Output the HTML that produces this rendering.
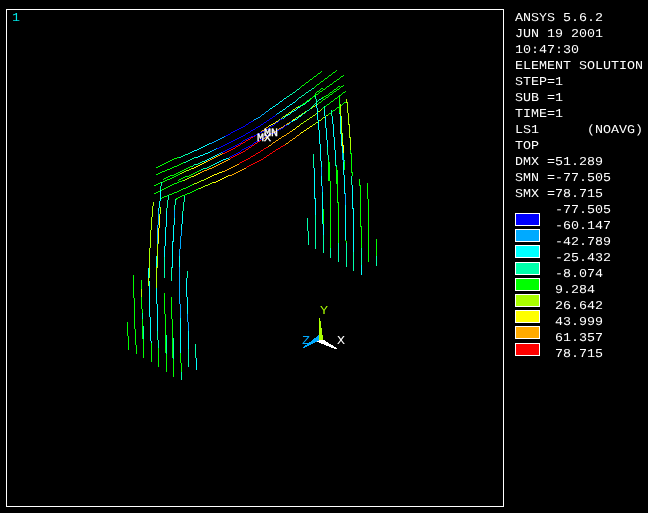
<!DOCTYPE html>
<html><head><meta charset="utf-8"><title>ANSYS 5.6.2 Element Solution</title>
<style>
html,body{margin:0;padding:0;background:#000;}
body{width:648px;height:513px;position:relative;overflow:hidden;font-family:"Liberation Mono","DejaVu Sans Mono",monospace;font-size:12px;color:#fff;text-rendering:geometricPrecision;}
.frame{position:absolute;left:6px;top:9px;width:496px;height:496px;border:1px solid #fff;}
.t{will-change:transform;position:absolute;height:16px;line-height:16px;white-space:nowrap;transform:scale(1.1111,1);transform-origin:0 12px;}
.bx{position:absolute;left:515px;width:23px;height:11px;border:1px solid #fff;}
svg{position:absolute;left:0;top:0;}
svg polyline{fill:none;stroke-width:1;}
</style></head><body>
<div class="frame"></div>
<svg width="648" height="513" viewBox="0 0 648 513" shape-rendering="crispEdges">
<path fill="#00ff00" d="M336 70h1v1h-1zM321 71h1v1h-1zM335 71h1v1h-1zM320 72h1v1h-1zM333 72h2v1h-2zM318 73h2v1h-2zM332 73h1v1h-1zM317 74h1v1h-1zM331 74h1v1h-1zM316 75h1v1h-1zM329 75h2v1h-2zM343 75h1v1h-1zM314 76h2v1h-2zM328 76h1v1h-1zM341 76h2v1h-2zM313 77h1v1h-1zM327 77h1v1h-1zM340 77h1v1h-1zM312 78h1v1h-1zM325 78h2v1h-2zM339 78h1v1h-1zM310 79h2v1h-2zM324 79h1v1h-1zM337 79h2v1h-2zM309 80h1v1h-1zM323 80h1v1h-1zM336 80h1v1h-1zM308 81h1v1h-1zM321 81h2v1h-2zM334 81h2v1h-2zM306 82h2v1h-2zM320 82h1v1h-1zM333 82h1v1h-1zM305 83h1v1h-1zM319 83h1v1h-1zM332 83h1v1h-1zM304 84h1v1h-1zM317 84h2v1h-2zM330 84h2v1h-2zM302 85h2v1h-2zM316 85h1v1h-1zM329 85h1v1h-1zM343 85h1v1h-1zM301 86h1v1h-1zM315 86h1v1h-1zM327 86h2v1h-2zM338 86h2v1h-2zM341 86h2v1h-2zM300 87h1v1h-1zM314 87h1v1h-1zM326 87h1v1h-1zM337 87h1v1h-1zM340 87h1v1h-1zM321 88h2v1h-2zM325 88h1v1h-1zM336 88h1v1h-1zM339 88h1v1h-1zM320 89h1v1h-1zM323 89h2v1h-2zM334 89h2v1h-2zM337 89h2v1h-2zM319 90h1v1h-1zM322 90h1v1h-1zM333 90h1v1h-1zM336 90h1v1h-1zM317 91h2v1h-2zM320 91h2v1h-2zM332 91h1v1h-1zM334 91h2v1h-2zM345 91h1v1h-1zM316 92h1v1h-1zM319 92h1v1h-1zM330 92h2v1h-2zM333 92h1v1h-1zM343 92h2v1h-2zM315 93v3h1v-3zM318 93h1v1h-1zM329 93h1v1h-1zM332 93h1v1h-1zM342 93h1v1h-1zM316 94h2v1h-2zM328 94h1v1h-1zM330 94h2v1h-2zM341 94h1v1h-1zM314 95v2h1v-2zM326 95h2v1h-2zM329 95h1v1h-1zM339 95v18h1v-18zM340 95h1v1h-1zM313 96h1v1h-1zM324 96h2v1h-2zM328 96h1v1h-1zM338 96h1v1h-1zM312 97h1v1h-1zM322 97h2v1h-2zM326 97h2v1h-2zM337 97h1v1h-1zM310 98h2v1h-2zM322 98h1v1h-1zM325 98h1v1h-1zM335 98h2v1h-2zM309 99h2v1h-2zM323 99h2v1h-2zM334 99h1v1h-1zM307 100h2v1h-2zM322 100h1v1h-1zM333 100h1v1h-1zM306 101h1v1h-1zM321 101h1v1h-1zM331 101h2v1h-2zM305 102h1v1h-1zM319 102h2v1h-2zM330 102h1v1h-1zM344 102h2v1h-2zM303 103h2v1h-2zM318 103h1v1h-1zM329 103h1v1h-1zM343 103h1v1h-1zM302 104h1v1h-1zM327 104h2v1h-2zM342 104h1v1h-1zM300 105h1v1h-1zM326 105h1v1h-1zM341 105h1v1h-1zM299 106h1v1h-1zM325 106h1v1h-1zM323 107h1v1h-1zM337 107h2v1h-2zM322 108h1v1h-1zM336 108h1v1h-1zM335 109h1v1h-1zM333 110h2v1h-2zM332 111h1v1h-1zM329 113h2v1h-2zM328 114h1v1h-1zM350 150v4h1v-4zM351 153v20h1v-20zM177 157h2v1h-2zM174 158h3v1h-3zM172 159h2v1h-2zM170 160h2v1h-2zM328 160v21h1v-21zM168 161h2v1h-2zM344 161v9h1v-9zM166 162h2v1h-2zM183 162h1v1h-1zM329 162v19h1v-19zM164 163h2v1h-2zM181 163h2v1h-2zM162 164h2v1h-2zM179 164h2v1h-2zM160 165h2v1h-2zM177 165h2v1h-2zM158 166h2v1h-2zM174 166h3v1h-3zM190 166h2v1h-2zM156 167h2v1h-2zM172 167h2v1h-2zM188 167h2v1h-2zM336 167v17h1v-17zM170 168h2v1h-2zM186 168h2v1h-2zM167 169h3v1h-3zM184 169h2v1h-2zM165 170h2v1h-2zM182 170h2v1h-2zM199 170h1v1h-1zM337 170v33h1v-33zM162 171h3v1h-3zM180 171h2v1h-2zM197 171h2v1h-2zM160 172h2v1h-2zM178 172h2v1h-2zM195 172h2v1h-2zM352 172v4h1v-4zM158 173h2v1h-2zM176 173h2v1h-2zM193 173h2v1h-2zM156 174h2v1h-2zM174 174h2v1h-2zM178 174h2v1h-2zM191 174h2v1h-2zM170 175h4v1h-4zM176 175h2v1h-2zM189 175h2v1h-2zM168 176h2v1h-2zM174 176h2v1h-2zM185 176h4v1h-4zM166 177h2v1h-2zM172 177h2v1h-2zM183 177h2v1h-2zM164 178h2v1h-2zM170 178h2v1h-2zM181 178h2v1h-2zM163 179h1v1h-1zM167 179h3v1h-3zM179 179h2v1h-2zM359 179v7h1v-7zM165 180h2v1h-2zM178 180h1v1h-1zM182 180h1v1h-1zM163 181h2v1h-2zM179 181h3v1h-3zM330 181v67h1v-67zM160 182h1v1h-1zM162 182h1v1h-1zM177 182h2v1h-2zM158 183h2v1h-2zM174 183h3v1h-3zM367 183v16h1v-16zM156 184h2v1h-2zM172 184h2v1h-2zM192 184h1v1h-1zM154 185h2v1h-2zM170 185h2v1h-2zM190 185h2v1h-2zM360 185v42h1v-42zM168 186h2v1h-2zM188 186h2v1h-2zM166 187h2v1h-2zM186 187h2v1h-2zM164 188h2v1h-2zM183 188h3v1h-3zM198 188h1v1h-1zM162 189h2v1h-2zM181 189h2v1h-2zM196 189h2v1h-2zM161 190h1v1h-1zM179 190h2v1h-2zM194 190h2v1h-2zM158 191h2v1h-2zM177 191h2v1h-2zM192 191h2v1h-2zM156 192h2v1h-2zM174 192h3v1h-3zM190 192h2v1h-2zM154 193h2v1h-2zM172 193h2v1h-2zM187 193h3v1h-3zM169 194h3v1h-3zM185 194h2v1h-2zM167 195h1v1h-1zM182 195h3v1h-3zM164 196h3v1h-3zM180 196h2v1h-2zM162 197h2v1h-2zM178 197h2v1h-2zM161 198h1v1h-1zM176 198h2v1h-2zM176 199h1v1h-1zM368 199v63h1v-63zM338 202v41h1v-41zM323 209v15h1v-15zM361 226v22h1v-22zM376 239v17h1v-17zM345 240h1v1h-1zM346 241v2h1v-2zM133 275v23h1v-23zM141 280v9h1v-9zM164 293v21h1v-21zM141 297v12h1v-12zM171 297v22h1v-22zM134 298v31h1v-31zM142 309v4h1v-4zM165 314v39h1v-39zM142 319v20h1v-20zM172 319v39h1v-39zM127 322v14h1v-14zM135 329v16h1v-16zM128 336v14h1v-14zM143 339v19h1v-19zM151 343v19h1v-19zM136 345v9h1v-9zM158 348v19h1v-19zM180 353v10h1v-10zM166 354v18h1v-18zM173 359v18h1v-18zM181 363v9h1v-9z"/>
<path fill="#00ffaa" d="M299 88h1v1h-1zM312 88h2v1h-2zM297 89h2v1h-2zM311 89h1v1h-1zM296 90h1v1h-1zM309 90h2v1h-2zM295 91h1v1h-1zM308 91h1v1h-1zM293 92h2v1h-2zM306 92h2v1h-2zM292 93h1v1h-1zM305 93h1v1h-1zM290 94h2v1h-2zM304 94h1v1h-1zM289 95h1v1h-1zM302 95h2v1h-2zM287 96h2v1h-2zM301 96h1v1h-1zM315 96v3h1v-3zM286 97h1v1h-1zM299 97h2v1h-2zM298 98h1v1h-1zM321 98h1v1h-1zM316 99v5h1v-5zM319 99h2v1h-2zM309 100h1v1h-1zM318 100h1v1h-1zM307 101h2v1h-2zM317 101h1v1h-1zM306 102h1v1h-1zM305 103h1v1h-1zM315 103h1v1h-1zM303 104h2v1h-2zM314 104h1v1h-1zM301 105h2v1h-2zM313 105h1v1h-1zM300 106h1v1h-1zM312 106h1v1h-1zM324 106v4h1v-4zM311 107h1v1h-1zM310 108h1v1h-1zM309 109h1v1h-1zM307 110h2v1h-2zM331 110v6h1v-6zM306 111h1v1h-1zM305 112h1v1h-1zM303 113h2v1h-2zM302 114h1v1h-1zM332 116h1v1h-1zM327 147v8h1v-8zM190 152h1v1h-1zM188 153h2v1h-2zM343 153v7h1v-7zM185 154h3v1h-3zM313 154v13h1v-13zM183 155h2v1h-2zM328 155v5h1v-5zM181 156h2v1h-2zM179 157h2v1h-2zM194 157h2v1h-2zM192 158h2v1h-2zM190 159h2v1h-2zM188 160h2v1h-2zM335 160v6h1v-6zM344 160h1v1h-1zM186 161h2v1h-2zM202 161h2v1h-2zM184 162h2v1h-2zM200 162h2v1h-2zM198 163h2v1h-2zM194 164h4v1h-4zM213 164h1v1h-1zM193 165h1v1h-1zM211 165h2v1h-2zM336 165v2h1v-2zM192 166h1v1h-1zM209 166h2v1h-2zM207 167h2v1h-2zM203 168h4v1h-4zM201 169h2v1h-2zM200 170h1v1h-1zM351 176v9h1v-9zM161 182v4h1v-4zM160 186v4h1v-4zM168 195v5h1v-5zM184 196v6h1v-6zM175 199v6h1v-6zM167 200v8h1v-8zM183 202v9h1v-9zM174 205v5h1v-5zM166 208v3h1v-3zM182 211v3h1v-3zM315 215v34h1v-34zM307 218v13h1v-13zM308 231v14h1v-14zM323 235v18h1v-18zM338 243v19h1v-19zM346 243v24h1v-24zM330 248v10h1v-10zM361 248v17h1v-17zM353 252v19h1v-19zM376 256v10h1v-10zM164 257v21h1v-21zM171 267v14h1v-14zM187 271v7h1v-7zM142 313v6h1v-6zM143 326v13h1v-13zM157 331v9h1v-9zM166 335v19h1v-19zM173 338v21h1v-21zM158 340v8h1v-8zM195 344v14h1v-14zM188 349v18h1v-18zM181 372v8h1v-8z"/>
<path fill="#00ffff" d="M284 98h2v1h-2zM283 99h1v1h-1zM297 99h1v1h-1zM282 100h1v1h-1zM296 100h1v1h-1zM280 101h2v1h-2zM295 101h1v1h-1zM279 102h1v1h-1zM293 102h2v1h-2zM278 103h1v1h-1zM292 103h1v1h-1zM276 104h2v1h-2zM290 104h2v1h-2zM316 104v4h1v-4zM275 105h1v1h-1zM289 105h1v1h-1zM273 106h2v1h-2zM287 106h2v1h-2zM272 107h1v1h-1zM286 107h1v1h-1zM298 107h2v1h-2zM270 108h2v1h-2zM285 108h1v1h-1zM297 108h1v1h-1zM317 108v12h1v-12zM269 109h1v1h-1zM283 109h2v1h-2zM296 109h1v1h-1zM282 110h1v1h-1zM294 110h2v1h-2zM324 110v6h1v-6zM280 111h2v1h-2zM292 111h2v1h-2zM279 112h1v1h-1zM291 112h1v1h-1zM290 113h1v1h-1zM339 113h1v1h-1zM288 114h2v1h-2zM286 115h2v1h-2zM301 115h1v1h-1zM285 116h1v1h-1zM299 116h2v1h-2zM325 116v12h1v-12zM340 116v18h1v-18zM284 117h1v1h-1zM298 117h1v1h-1zM332 117v7h1v-7zM283 118h1v1h-1zM297 118h1v1h-1zM295 119h2v1h-2zM293 120h2v1h-2zM318 120v10h1v-10zM292 121h1v1h-1zM333 124v13h1v-13zM326 128v12h1v-12zM319 130v14h1v-14zM341 134v12h1v-12zM334 137v13h1v-13zM327 140v7h1v-7zM209 143h1v1h-1zM207 144h2v1h-2zM320 144v17h1v-17zM205 145h2v1h-2zM203 146h2v1h-2zM342 146v7h1v-7zM201 147h2v1h-2zM199 148h2v1h-2zM197 149h2v1h-2zM194 150h3v1h-3zM335 150v10h1v-10zM192 151h2v1h-2zM210 151h1v1h-1zM191 152h1v1h-1zM208 152h2v1h-2zM205 153h3v1h-3zM203 154h2v1h-2zM217 154h1v1h-1zM200 155h3v1h-3zM215 155h2v1h-2zM198 156h2v1h-2zM213 156h2v1h-2zM196 157h2v1h-2zM211 157h2v1h-2zM209 158h2v1h-2zM226 158h2v1h-2zM207 159h2v1h-2zM223 159h3v1h-3zM205 160h2v1h-2zM221 160h2v1h-2zM204 161h1v1h-1zM219 161h2v1h-2zM321 161v6h1v-6zM217 162h2v1h-2zM343 162v13h1v-13zM215 163h2v1h-2zM214 164h1v1h-1zM313 167h1v1h-1zM314 168v31h1v-31zM344 175v19h1v-19zM321 176v10h1v-10zM352 185v24h1v-24zM160 190v11h1v-11zM322 192v32h1v-32zM315 198v17h1v-17zM159 201v7h1v-7zM345 205v35h1v-35zM158 208v3h1v-3zM353 208v44h1v-44zM166 211v16h1v-16zM182 214v10h1v-10zM174 218v7h1v-7zM181 224v6h1v-6zM323 224v11h1v-11zM173 225v17h1v-17zM165 227v19h1v-19zM172 241v27h1v-27zM164 246v11h1v-11zM156 256v11h1v-11zM179 256v11h1v-11zM361 265v10h1v-10zM148 268v10h1v-10zM186 278v19h1v-19zM149 281v36h1v-36zM156 288v16h1v-16zM187 297v17h1v-17zM157 304v27h1v-27zM150 317v24h1v-24zM180 318v35h1v-35zM188 331v18h1v-18zM151 341v2h1v-2zM196 358v12h1v-12z"/>
<path fill="#aaff00" d="M346 99v4h1v-4zM347 102v11h1v-11zM317 104h1v1h-1zM340 104v12h1v-12zM315 105h1v1h-1zM298 106h1v1h-1zM313 106h2v1h-2zM296 107h2v1h-2zM312 107h1v1h-1zM295 108h1v1h-1zM311 108h1v1h-1zM293 109h2v1h-2zM321 109h1v1h-1zM292 110h1v1h-1zM320 110h1v1h-1zM291 111h1v1h-1zM305 111h1v1h-1zM318 111h2v1h-2zM289 112h2v1h-2zM304 112h1v1h-1zM288 113h1v1h-1zM302 113h1v1h-1zM316 113h1v1h-1zM348 113v12h1v-12zM286 114h2v1h-2zM301 114h1v1h-1zM315 114h1v1h-1zM285 115h1v1h-1zM299 115h2v1h-2zM313 115h2v1h-2zM326 115h2v1h-2zM283 116h2v1h-2zM298 116h1v1h-1zM312 116h1v1h-1zM341 116v18h1v-18zM282 117h1v1h-1zM296 117h2v1h-2zM310 117h2v1h-2zM323 117h2v1h-2zM281 118h1v1h-1zM295 118h1v1h-1zM309 118h1v1h-1zM322 118h1v1h-1zM279 119h1v1h-1zM307 119h2v1h-2zM321 119h1v1h-1zM278 120h1v1h-1zM306 120h1v1h-1zM319 120h2v1h-2zM304 121h2v1h-2zM303 122h1v1h-1zM316 122h2v1h-2zM301 123h2v1h-2zM315 123h1v1h-1zM300 124h1v1h-1zM313 124h2v1h-2zM349 124v14h1v-14zM312 125h1v1h-1zM342 133v9h1v-9zM350 137v13h1v-13zM191 168h1v1h-1zM189 169h2v1h-2zM186 170h3v1h-3zM184 171h2v1h-2zM182 172h2v1h-2zM180 173h2v1h-2zM191 176h1v1h-1zM189 177h2v1h-2zM187 178h2v1h-2zM206 178h1v1h-1zM185 179h2v1h-2zM204 179h2v1h-2zM183 180h2v1h-2zM201 180h3v1h-3zM199 181h2v1h-2zM197 182h2v1h-2zM212 182h1v1h-1zM194 183h3v1h-3zM210 183h2v1h-2zM193 184h1v1h-1zM208 184h2v1h-2zM205 185h3v1h-3zM203 186h2v1h-2zM201 187h2v1h-2zM199 188h2v1h-2zM153 202v4h1v-4zM152 206v11h1v-11zM160 207v7h1v-7zM159 214v2h1v-2zM151 217v13h1v-13zM150 230v18h1v-18zM158 243h1v1h-1zM157 244v24h1v-24zM149 248v30h1v-30zM156 267v21h1v-21zM148 278v8h1v-8zM141 289v8h1v-8z"/>
<path fill="#00aaff" d="M268 110h1v1h-1zM266 111h2v1h-2zM265 112h1v1h-1zM264 113h1v1h-1zM277 113h2v1h-2zM262 114h2v1h-2zM276 114h1v1h-1zM261 115h1v1h-1zM260 116h1v1h-1zM258 117h2v1h-2zM256 118h2v1h-2zM254 119h2v1h-2zM253 120h1v1h-1zM291 121h1v1h-1zM290 122h1v1h-1zM289 123h1v1h-1zM287 124h2v1h-2zM224 136h1v1h-1zM222 137h2v1h-2zM220 138h2v1h-2zM218 139h2v1h-2zM216 140h2v1h-2zM214 141h2v1h-2zM212 142h2v1h-2zM210 143h2v1h-2zM216 148h1v1h-1zM214 149h2v1h-2zM212 150h2v1h-2zM211 151h1v1h-1zM221 152h1v1h-1zM219 153h2v1h-2zM342 153v7h1v-7zM218 154h1v1h-1zM229 157h1v1h-1zM228 158h1v1h-1zM343 160v2h1v-2zM321 167v9h1v-9zM322 186v6h1v-6zM345 193v12h1v-12zM174 210v8h1v-8zM158 211v14h1v-14zM157 225v19h1v-19zM181 230v6h1v-6zM180 236v13h1v-13zM179 249v7h1v-7zM179 267v37h1v-37zM180 304v14h1v-14zM187 314v8h1v-8zM188 322v9h1v-9z"/>
<path fill="#0000ff" d="M275 115h1v1h-1zM273 116h2v1h-2zM272 117h1v1h-1zM270 118h2v1h-2zM282 118h1v1h-1zM269 119h1v1h-1zM280 119h2v1h-2zM267 120h2v1h-2zM279 120h1v1h-1zM251 121h2v1h-2zM266 121h1v1h-1zM278 121h1v1h-1zM249 122h2v1h-2zM264 122h2v1h-2zM276 122h2v1h-2zM248 123h1v1h-1zM263 123h1v1h-1zM275 123h1v1h-1zM246 124h2v1h-2zM261 124h2v1h-2zM274 124h1v1h-1zM245 125h1v1h-1zM260 125h1v1h-1zM272 125h2v1h-2zM285 125h2v1h-2zM243 126h2v1h-2zM258 126h2v1h-2zM270 126h2v1h-2zM284 126h1v1h-1zM241 127h2v1h-2zM256 127h2v1h-2zM269 127h1v1h-1zM283 127h1v1h-1zM239 128h2v1h-2zM255 128h1v1h-1zM268 128h1v1h-1zM281 128h2v1h-2zM237 129h2v1h-2zM253 129h2v1h-2zM266 129h2v1h-2zM279 129h2v1h-2zM235 130h2v1h-2zM251 130h2v1h-2zM264 130h2v1h-2zM277 130h2v1h-2zM233 131h2v1h-2zM250 131h1v1h-1zM262 131h2v1h-2zM276 131h1v1h-1zM231 132h2v1h-2zM248 132h2v1h-2zM260 132h2v1h-2zM274 132h2v1h-2zM230 133h1v1h-1zM246 133h2v1h-2zM258 133h2v1h-2zM270 133h4v1h-4zM228 134h2v1h-2zM245 134h1v1h-1zM256 134h2v1h-2zM268 134h2v1h-2zM226 135h2v1h-2zM243 135h2v1h-2zM254 135h2v1h-2zM266 135h2v1h-2zM225 136h1v1h-1zM241 136h2v1h-2zM251 136h3v1h-3zM265 136h1v1h-1zM239 137h2v1h-2zM249 137h2v1h-2zM264 137h1v1h-1zM237 138h2v1h-2zM247 138h2v1h-2zM262 138h2v1h-2zM235 139h2v1h-2zM245 139h2v1h-2zM260 139h2v1h-2zM233 140h2v1h-2zM243 140h2v1h-2zM258 140h2v1h-2zM231 141h2v1h-2zM242 141h1v1h-1zM256 141h2v1h-2zM229 142h2v1h-2zM241 142h1v1h-1zM254 142h2v1h-2zM227 143h2v1h-2zM239 143h2v1h-2zM253 143h1v1h-1zM225 144h2v1h-2zM237 144h2v1h-2zM252 144h1v1h-1zM223 145h2v1h-2zM235 145h2v1h-2zM250 145h2v1h-2zM221 146h2v1h-2zM233 146h2v1h-2zM248 146h2v1h-2zM219 147h2v1h-2zM231 147h2v1h-2zM246 147h2v1h-2zM217 148h2v1h-2zM229 148h2v1h-2zM244 148h2v1h-2zM227 149h2v1h-2zM242 149h2v1h-2zM225 150h2v1h-2zM241 150h1v1h-1zM223 151h2v1h-2zM240 151h1v1h-1zM222 152h1v1h-1zM238 152h2v1h-2zM236 153h2v1h-2zM234 154h2v1h-2zM232 155h2v1h-2zM230 156h2v1h-2z"/>
<path fill="#ffff00" d="M293 119h2v1h-2zM292 120h1v1h-1zM276 121h2v1h-2zM275 122h1v1h-1zM273 123h2v1h-2zM271 124h2v1h-2zM269 125h2v1h-2zM299 125h1v1h-1zM268 126h1v1h-1zM297 126h2v1h-2zM310 126h2v1h-2zM296 127h1v1h-1zM309 127h1v1h-1zM295 128h1v1h-1zM307 128h2v1h-2zM293 129h2v1h-2zM306 129h1v1h-1zM292 130h1v1h-1zM304 130h2v1h-2zM303 131h1v1h-1zM301 132h2v1h-2zM300 133h1v1h-1zM342 142v4h1v-4zM343 145v8h1v-8zM206 161h1v1h-1zM204 162h2v1h-2zM202 163h2v1h-2zM200 164h2v1h-2zM198 165h2v1h-2zM196 166h2v1h-2zM194 167h2v1h-2zM192 168h2v1h-2zM222 171h1v1h-1zM219 172h3v1h-3zM198 173h2v1h-2zM217 173h2v1h-2zM196 174h2v1h-2zM214 174h3v1h-3zM194 175h2v1h-2zM212 175h2v1h-2zM228 175h1v1h-1zM192 176h2v1h-2zM210 176h2v1h-2zM226 176h2v1h-2zM208 177h2v1h-2zM224 177h2v1h-2zM207 178h1v1h-1zM222 178h2v1h-2zM220 179h2v1h-2zM218 180h2v1h-2zM216 181h2v1h-2zM213 182h3v1h-3zM159 216v12h1v-12zM158 228v15h1v-15z"/>
<path fill="#ffaa00" d="M289 122h1v1h-1zM287 123h2v1h-2zM286 124h1v1h-1zM284 125h1v1h-1zM283 126h1v1h-1zM266 127h2v1h-2zM281 127h2v1h-2zM265 128h1v1h-1zM279 128h2v1h-2zM264 129h1v1h-1zM278 129h1v1h-1zM262 130h2v1h-2zM276 130h1v1h-1zM261 131h1v1h-1zM275 131h1v1h-1zM290 131h2v1h-2zM273 132h1v1h-1zM289 132h1v1h-1zM287 133h2v1h-2zM270 134h1v1h-1zM286 134h1v1h-1zM299 134h1v1h-1zM268 135h2v1h-2zM284 135h2v1h-2zM297 135h2v1h-2zM267 136h1v1h-1zM282 136h2v1h-2zM296 136h1v1h-1zM265 137h2v1h-2zM281 137h1v1h-1zM295 137h1v1h-1zM264 138h1v1h-1zM279 138h2v1h-2zM293 138h2v1h-2zM262 139h1v1h-1zM278 139h1v1h-1zM292 139h1v1h-1zM276 140h2v1h-2zM290 140h2v1h-2zM275 141h1v1h-1zM289 141h1v1h-1zM273 142h2v1h-2zM288 142h1v1h-1zM272 143h1v1h-1zM286 143h2v1h-2zM271 144h1v1h-1zM285 144h1v1h-1zM269 145h2v1h-2zM268 146h1v1h-1zM222 153h1v1h-1zM220 154h2v1h-2zM218 155h2v1h-2zM216 156h2v1h-2zM214 157h2v1h-2zM212 158h2v1h-2zM210 159h2v1h-2zM228 159h2v1h-2zM208 160h2v1h-2zM226 160h2v1h-2zM207 161h1v1h-1zM224 161h2v1h-2zM222 162h2v1h-2zM220 163h2v1h-2zM218 164h2v1h-2zM237 164h2v1h-2zM216 165h2v1h-2zM235 165h2v1h-2zM214 166h2v1h-2zM233 166h2v1h-2zM212 167h2v1h-2zM231 167h2v1h-2zM209 168h3v1h-3zM229 168h2v1h-2zM244 168h2v1h-2zM207 169h2v1h-2zM227 169h2v1h-2zM242 169h2v1h-2zM204 170h3v1h-3zM225 170h2v1h-2zM240 170h2v1h-2zM202 171h2v1h-2zM223 171h2v1h-2zM238 171h2v1h-2zM200 172h2v1h-2zM236 172h2v1h-2zM234 173h2v1h-2zM232 174h2v1h-2zM229 175h3v1h-3z"/>
<path fill="#ff0000" d="M254 136h1v1h-1zM251 137h2v1h-2zM250 138h1v1h-1zM248 139h2v1h-2zM246 140h2v1h-2zM260 140h1v1h-1zM245 141h1v1h-1zM258 141h2v1h-2zM243 142h2v1h-2zM257 142h1v1h-1zM241 143h2v1h-2zM255 143h2v1h-2zM240 144h1v1h-1zM254 144h1v1h-1zM238 145h2v1h-2zM252 145h2v1h-2zM283 145h2v1h-2zM236 146h2v1h-2zM251 146h1v1h-1zM281 146h2v1h-2zM235 147h1v1h-1zM249 147h2v1h-2zM266 147h2v1h-2zM280 147h1v1h-1zM233 148h2v1h-2zM248 148h1v1h-1zM264 148h2v1h-2zM278 148h2v1h-2zM231 149h2v1h-2zM246 149h2v1h-2zM263 149h1v1h-1zM276 149h2v1h-2zM229 150h2v1h-2zM245 150h1v1h-1zM261 150h2v1h-2zM275 150h1v1h-1zM227 151h2v1h-2zM243 151h2v1h-2zM260 151h1v1h-1zM273 151h2v1h-2zM225 152h2v1h-2zM241 152h2v1h-2zM258 152h2v1h-2zM272 152h1v1h-1zM223 153h2v1h-2zM239 153h2v1h-2zM256 153h2v1h-2zM270 153h2v1h-2zM237 154h2v1h-2zM255 154h1v1h-1zM269 154h1v1h-1zM235 155h2v1h-2zM253 155h2v1h-2zM267 155h2v1h-2zM233 156h2v1h-2zM251 156h2v1h-2zM266 156h1v1h-1zM231 157h2v1h-2zM250 157h1v1h-1zM264 157h2v1h-2zM230 158h1v1h-1zM248 158h2v1h-2zM263 158h1v1h-1zM246 159h2v1h-2zM261 159h2v1h-2zM244 160h2v1h-2zM259 160h2v1h-2zM242 161h2v1h-2zM257 161h2v1h-2zM240 162h2v1h-2zM255 162h2v1h-2zM239 163h1v1h-1zM253 163h2v1h-2zM251 164h2v1h-2zM249 165h2v1h-2zM247 166h2v1h-2zM246 167h1v1h-1z"/>
<polygon points="317,340.6 323.2,339.6 337.4,348.6 336.4,349.5 317,341.8" fill="#ffffff"/>
<polygon points="300.6,349.4 320,334 320,339.6 317,341.5" fill="#00aaff"/>
<polygon points="319,317.8 320,317.8 323.3,340.4 319,340.4" fill="#aaff00"/>
</svg>
<div class="bx" style="top:213px;background:#0000ff"></div><div class="bx" style="top:229px;background:#00aaff"></div><div class="bx" style="top:245px;background:#00ffff"></div><div class="bx" style="top:262px;background:#00ffaa"></div><div class="bx" style="top:278px;background:#00ff00"></div><div class="bx" style="top:294px;background:#aaff00"></div><div class="bx" style="top:310px;background:#ffff00"></div><div class="bx" style="top:326px;background:#ffaa00"></div><div class="bx" style="top:343px;background:#ff0000"></div>
<div class="t" style="left:515px;top:10px;">ANSYS&nbsp;5.6.2</div>
<div class="t" style="left:515px;top:26px;">JUN&nbsp;19&nbsp;2001</div>
<div class="t" style="left:515px;top:42px;">10:47:30</div>
<div class="t" style="left:515px;top:58px;">ELEMENT&nbsp;SOLUTION</div>
<div class="t" style="left:515px;top:74px;">STEP=1</div>
<div class="t" style="left:515px;top:90px;">SUB&nbsp;=1</div>
<div class="t" style="left:515px;top:106px;">TIME=1</div>
<div class="t" style="left:515px;top:122px;">LS1&nbsp;&nbsp;&nbsp;&nbsp;&nbsp;&nbsp;(NOAVG)</div>
<div class="t" style="left:515px;top:138px;">TOP</div>
<div class="t" style="left:515px;top:154px;">DMX&nbsp;=51.289</div>
<div class="t" style="left:515px;top:170px;">SMN&nbsp;=-77.505</div>
<div class="t" style="left:515px;top:186px;">SMX&nbsp;=78.715</div>
<div class="t" style="left:555px;top:202px;">-77.505</div>
<div class="t" style="left:555px;top:218px;">-60.147</div>
<div class="t" style="left:555px;top:234px;">-42.789</div>
<div class="t" style="left:555px;top:250px;">-25.432</div>
<div class="t" style="left:555px;top:266px;">-8.074</div>
<div class="t" style="left:555px;top:282px;">9.284</div>
<div class="t" style="left:555px;top:298px;">26.642</div>
<div class="t" style="left:555px;top:314px;">43.999</div>
<div class="t" style="left:555px;top:330px;">61.357</div>
<div class="t" style="left:555px;top:346px;">78.715</div>
<div class="t" style="left:12px;top:10px;color:#00e5e5">1</div>
<div class="t" style="left:264px;top:126px;font-size:11px;transform:scale(1.06,1);-webkit-text-stroke:0.3px #fff;">MN</div>
<div class="t" style="left:257px;top:131px;font-size:11px;transform:scale(1.06,1);-webkit-text-stroke:0.3px #fff;">MX</div>
<div class="t" style="left:320px;top:303px;color:#aaff00">Y</div>
<div class="t" style="left:337px;top:333px;">X</div>
<div class="t" style="left:302px;top:333px;color:#00aaff">Z</div>
</body></html>
